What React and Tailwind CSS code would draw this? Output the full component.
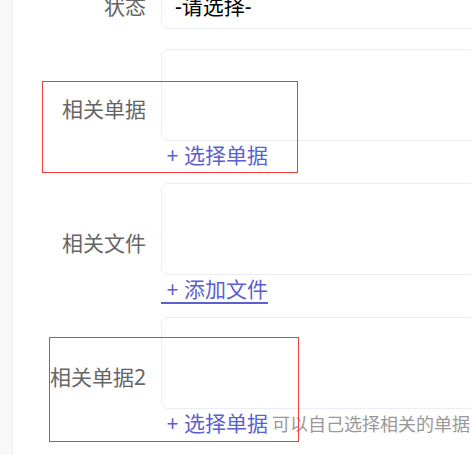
import React from 'react';

const FONT = { fontFamily: '"Noto Sans", "Noto Sans CJK SC", sans-serif' };

const Field = ({ label, link, underline, hint }) => (
    <div className="flex items-center">
        <div className="w-[133px] shrink-0 text-right text-[21px] leading-none text-[#666] whitespace-nowrap">
            {label}
        </div>
        <div className="ml-[15px] flex-1 flex flex-col">
            <div className="h-[92px] w-[400px] rounded-[7px] border border-[#ececf6] bg-white"></div>
            <div className="h-[29px] flex items-center whitespace-nowrap">
                <span
                    className={`text-[21px] leading-none text-[#5b5fd0] ${underline ? 'underline underline-offset-[5px] decoration-[2px]' : ''}`}
                >
                    {'\u00a0' + link}
                </span>
                {hint && <span className="ml-[4px] text-[18px] leading-none text-[#999]">{hint}</span>}
            </div>
        </div>
    </div>
);

export default function App() {
    return (
        <div className="relative w-[471px] h-[455px] overflow-hidden bg-white flex" style={FONT}>
            <div className="w-[13px] shrink-0 bg-[#f8f8fb] border-r border-[#efeff4]"></div>

            <div className="flex-1 flex flex-col -mt-[16px]">
                {/* status select */}
                <div className="flex items-center">
                    <div className="w-[133px] shrink-0 text-right text-[21px] leading-none text-[#666]">状态</div>
                    <div className="ml-[15px] h-[45px] w-[400px] shrink-0 rounded-[7px] border border-[#ececf6] flex items-center pl-[13px] text-[21px] leading-none text-black">
                        -请选择-
                    </div>
                </div>

                <div className="mt-[20px] flex flex-col gap-[13px]">
                    <Field label="相关单据" link="+ 选择单据" />
                    <Field label="相关文件" link="+ 添加文件" underline />
                    <Field label="相关单据2" link="+ 选择单据" hint="可以自己选择相关的单据添加" />
                </div>
            </div>

            {/* highlight overlays */}
            <div className="absolute left-[42px] top-[81px] w-[256px] h-[92px] border border-[#f03c3c] pointer-events-none"></div>
            <div className="absolute left-[49px] top-[337px] w-[250px] h-[105px] border border-[#f03c3c] pointer-events-none"></div>
        </div>
    );
}
